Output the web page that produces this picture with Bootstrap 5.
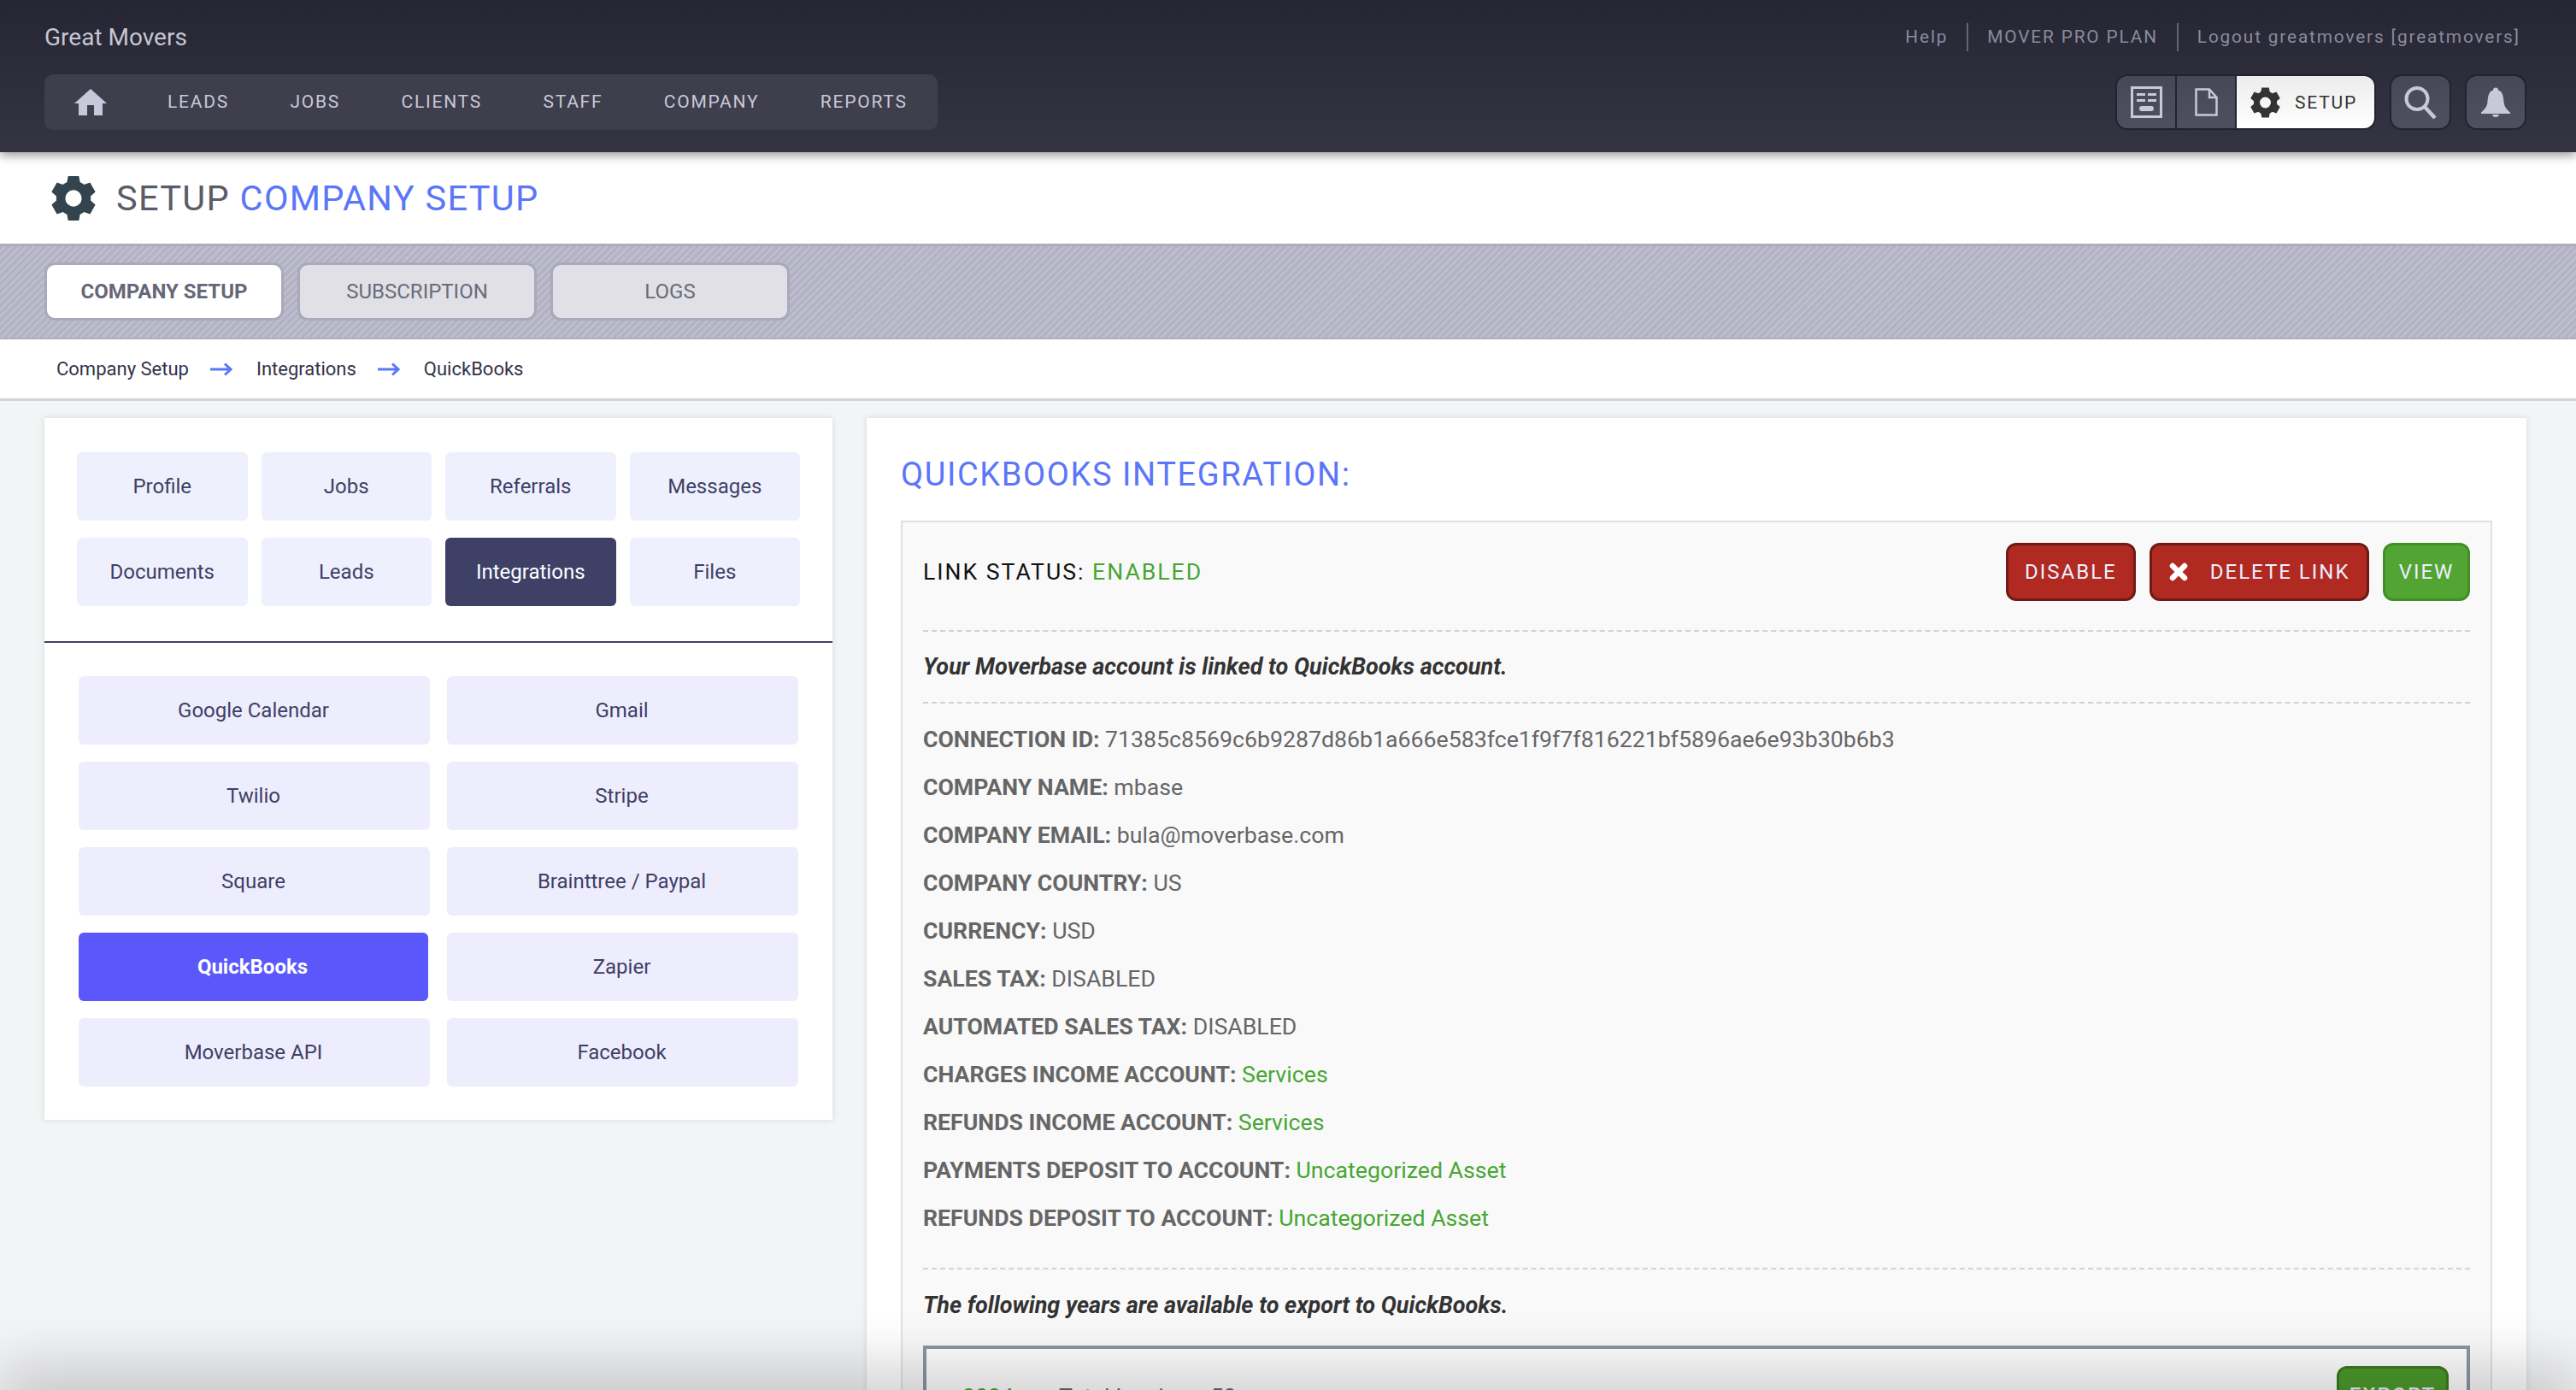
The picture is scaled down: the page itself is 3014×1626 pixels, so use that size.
<!DOCTYPE html>
<html lang="en">
<head>
<meta charset="utf-8">
<title>Great Movers</title>
<link rel="stylesheet" href="https://cdn.jsdelivr.net/npm/bootstrap@5.3.0/dist/css/bootstrap.min.css">
<style>
html,body{height:100%;overflow:hidden}
body{font-family:Roboto,"Liberation Sans",sans-serif;background:#f3f4f6;color:#666;font-size:26.7px}
.app-head{background:linear-gradient(#252533,#343443);height:178px;padding:0 58px 0 52px;position:relative;z-index:2;box-shadow:0 3px 12px rgba(0,0,0,.45)}
.head-top{height:87px}
.brand-name{font-size:28px;color:#c6c6d4}
.top-links{font-size:20.8px;letter-spacing:1.85px;color:#8b8b9d}
.top-links span{padding:0 22px;border-right:2px solid #666672;line-height:33px;display:block}
.top-links span:first-child{padding-left:0}
.top-links span:last-child{border:0;padding-right:7px}
.main-nav{height:65px;width:1045px;background:#3e3e4c;border-radius:10px;padding-left:35px}
.main-nav a{font-size:21px;letter-spacing:1.75px;color:#c9c8da;text-decoration:none;margin-right:71.500px}
.main-nav a.home{margin-right:71px;display:flex}
.main-nav a:last-child{margin-right:0}
.tool-group{height:65px;border:2px solid #222230;border-radius:14px;background:#222230;overflow:hidden;width:305px;gap:2px}
.tool-cell{background:linear-gradient(#474757,#4f4f60);height:100%;width:68px}
.tool-setup{flex:1;background:linear-gradient(#ececec,#fff);color:#333;font-size:21px;letter-spacing:1.8px;padding:2px 0 0 16px;gap:17px}
.tool-setup svg{margin-top:-2px}
.tool-round{width:72px;height:65px;border:2px solid #222230;border-radius:14px;background:linear-gradient(#474757,#4f4f60)}
.title-row{height:107px;background:#fff;padding-left:60px;gap:24px}
.title-cog{color:#34444f}
.title-text{font-size:41.5px;letter-spacing:1.3px;color:#5a5c68;line-height:1;margin:0;font-weight:400}
.title-text span,.panel-heading{color:#5b76f7}
.tab-strip{height:113px;border-top:3px solid #adadbd;border-bottom:3px solid #adadbd;background:repeating-linear-gradient(135deg,#b2b2c4 0 3px,#bdbdcd 3px 6px);padding:19px 52px 0 52px;gap:16px}
.tab-btn{width:280px;height:68px;border:3px solid #a9a9bb;border-radius:12px;background:#e0e0e6;color:#6a6b7a;font-size:24px;padding:0;display:flex;align-items:center;justify-content:center}
.tab-btn.is-on{background:#fff;font-weight:700;color:#666776}
.crumbs{height:72px;background:#fff;border-bottom:3px solid #d2d2da;padding-left:66px;font-size:22px;color:#32334a;margin-top:-1px}
.crumbs svg{margin:0 28px 0 25px}
.work-area{padding:20px 58px 0 52px;gap:40px;align-items:flex-start}
.side-card{width:922px;background:#fff;box-shadow:0 0 7px rgba(0,0,0,.12);height:821px}
.side-top{padding:40px 38px 41px 38px;border-bottom:2px solid #3e3f66;display:grid;grid-template-columns:repeat(4,1fr);gap:20px 16px}
.side-bot{padding:39px 40px;display:grid;grid-template-columns:repeat(2,1fr);gap:20px}
.side-btn{height:80px;border:0;border-radius:6px;background:#eef1fd;color:#3e3f66;font-size:24px;padding:0;display:flex;align-items:center;justify-content:center}
.side-bot .side-btn{background:#eeedfd;padding-right:2px}
.side-top .side-btn.is-on{background:#3e4066;color:#fff}
.side-bot .side-btn.is-on{background:#5a58fb;color:#fff;font-weight:700;width:409px}
.main-panel{width:1942px;background:#fff;box-shadow:0 0 7px rgba(0,0,0,.12);padding:0 40px;height:1300px}
.panel-heading{font-size:38px;letter-spacing:1.6px;line-height:1;margin:0;padding:47px 0 35px;font-weight:400}
.info-box{border:2px solid #e0e0e8;background:#f9f9fa;padding:24px 24px}
.status-line{font-size:26.6px;letter-spacing:2px;color:#111}
.good{color:#47a632}
.act-btn{height:68px;border-radius:12px;border:3px solid #6f1a15;background:#b02a22;color:#eeeeff;font-size:24px;letter-spacing:2px;padding:0 19.500px;display:flex;align-items:center;justify-content:center}
.act-btn.go{background:#52a532;border-color:#428f26;padding:0 16px;width:102px}
.act-btn.export-btn{background:#4d9b2c;border-color:#3d7a22;width:131px;padding:0;font-weight:500}
.act-btn:hover{color:#fff}
.cross{margin-right:26px}
.dash{border-top:2px dashed #d2d2d2}
.dash-a{margin-top:34px}
.dash-c{margin-top:37px}
.note{font-size:27px;font-weight:700;font-style:italic;color:#333;line-height:42px}
.note-a{margin:20px 0}
.note-c{margin:21px 0 26px}
.fields{padding-top:21px}
.field{line-height:42px;margin-bottom:14px;white-space:nowrap}
.field b{font-weight:700}
.year-box{border:4px solid #8a97a6;background:#fff;height:200px;padding:20px 21px 0 42px}
.year-line{padding-top:15px;line-height:42px}
.year-total{margin-left:53px}
.page-fade{position:fixed;left:20px;right:20px;bottom:-30px;height:30px;box-shadow:0 0 70px 24px rgba(0,0,0,.2);z-index:5}
</style>
</head>
<body>
<svg width="0" height="0" class="d-block">
<symbol id="cog" viewBox="-27 -27 54 54">
<circle r="15.5" fill="none" stroke="currentColor" stroke-width="11"/>
<g fill="currentColor">
<polygon id="tooth" points="-8.5,-17 -6.5,-27 6.5,-27 8.5,-17"/>
<use href="#tooth" transform="rotate(60)"/><use href="#tooth" transform="rotate(120)"/><use href="#tooth" transform="rotate(180)"/><use href="#tooth" transform="rotate(240)"/><use href="#tooth" transform="rotate(300)"/>
</g>
</symbol>
<symbol id="arrow" viewBox="0 0 26 16">
<path d="M0 8H24M17 1.5 24 8 17 14.5" fill="none" stroke="#5b76f7" stroke-width="3"/>
</symbol>
</svg>

<header class="app-head">
<div class="head-top d-flex justify-content-between align-items-center">
<div class="brand-name">Great Movers</div>
<div class="top-links d-flex"><span>Help</span><span>MOVER PRO PLAN</span><span>Logout greatmovers [greatmovers]</span></div>
</div>
<div class="d-flex justify-content-between align-items-center">
<nav class="main-nav d-flex align-items-center">
<a class="home" href="#"><svg width="38" height="31" viewBox="0 0 38 31"><path d="M19 0 38 17H33V31H23V19H15V31H5V17H0Z" fill="#c9c8da"/></svg></a>
<a href="#">LEADS</a><a href="#">JOBS</a><a href="#">CLIENTS</a><a href="#">STAFF</a><a href="#">COMPANY</a><a href="#">REPORTS</a>
</nav>
<div class="d-flex align-items-center gap-3">
<div class="tool-group d-flex">
<div class="tool-cell d-flex align-items-center justify-content-center">
<svg width="37" height="37" viewBox="0 0 37 37" fill="#c9c8da"><rect x="1.5" y="1.5" width="34" height="34" fill="none" stroke="#c9c8da" stroke-width="3"/><rect x="7" y="8" width="10" height="3"/><rect x="20" y="8" width="10" height="3"/><rect x="7" y="15" width="10" height="3"/><rect x="20" y="15" width="10" height="3"/><rect x="10" y="23" width="17" height="6" rx="3"/></svg>
</div>
<div class="tool-cell d-flex align-items-center justify-content-center">
<svg width="27" height="33" viewBox="0 0 27 33" fill="none" stroke="#c9c8da" stroke-width="2.5"><path d="M1.5 1.5H17L25.5 11V31.5H1.5Z"/><path d="M17 1.5V11H25.5" /></svg>
</div>
<div class="tool-setup d-flex align-items-center"><svg width="35" height="36"><use href="#cog"/></svg>SETUP</div>
</div>
<div class="tool-round d-flex align-items-center justify-content-center">
<svg width="40" height="40" viewBox="0 0 40 40" fill="none" stroke="#c9c8da"><circle cx="16" cy="15.500" r="12.500" stroke-width="4"/><path d="M24 24 37 38" stroke-width="4.500"/></svg>
</div>
<div class="tool-round d-flex align-items-center justify-content-center">
<svg width="34" height="35" viewBox="0 0 34 35" fill="#c9c8da"><circle cx="17" cy="3.500" r="3"/><path d="M17 3C25 3 26 10 26.500 17 27 23 30 26 34 29.500V31H0V29.500C4 26 7 23 7.500 17 8 10 9 3 17 3Z"/><path d="M13 32H21C21 36 13 36 13 32Z"/></svg>
</div>
</div>
</div>
</header>

<section class="title-row d-flex align-items-center">
<svg width="52" height="54" class="title-cog"><use href="#cog"/></svg>
<h1 class="title-text">SETUP <span>COMPANY SETUP</span></h1>
</section>

<section class="tab-strip d-flex">
<a class="btn tab-btn is-on" href="#">COMPANY SETUP</a>
<a class="btn tab-btn" href="#">SUBSCRIPTION</a>
<a class="btn tab-btn" href="#">LOGS</a>
</section>

<section class="crumbs d-flex align-items-center">
<span>Company Setup</span><svg width="26" height="16"><use href="#arrow"/></svg><span>Integrations</span><svg width="26" height="16"><use href="#arrow"/></svg><span>QuickBooks</span>
</section>

<main class="work-area d-flex">
<aside class="side-card">
<div class="side-top">
<a class="btn side-btn" href="#">Profile</a><a class="btn side-btn" href="#">Jobs</a><a class="btn side-btn" href="#">Referrals</a><a class="btn side-btn" href="#">Messages</a>
<a class="btn side-btn" href="#">Documents</a><a class="btn side-btn" href="#">Leads</a><a class="btn side-btn is-on" href="#">Integrations</a><a class="btn side-btn" href="#">Files</a>
</div>
<div class="side-bot">
<a class="btn side-btn" href="#">Google Calendar</a><a class="btn side-btn" href="#">Gmail</a>
<a class="btn side-btn" href="#">Twilio</a><a class="btn side-btn" href="#">Stripe</a>
<a class="btn side-btn" href="#">Square</a><a class="btn side-btn" href="#">Brainttree / Paypal</a>
<a class="btn side-btn is-on" href="#">QuickBooks</a><a class="btn side-btn" href="#">Zapier</a>
<a class="btn side-btn" href="#">Moverbase API</a><a class="btn side-btn" href="#">Facebook</a>
</div>
</aside>
<section class="main-panel">
<h2 class="panel-heading">QUICKBOOKS INTEGRATION:</h2>
<div class="info-box">
<div class="d-flex justify-content-between align-items-center">
<div class="status-line">LINK STATUS: <span class="good">ENABLED</span></div>
<div class="d-flex gap-3">
<a class="btn act-btn" href="#">DISABLE</a>
<a class="btn act-btn" href="#"><svg width="22" height="22" viewBox="0 0 22 22" class="cross"><path d="M4 4 18 18M18 4 4 18" stroke="#fff" stroke-width="6.500" stroke-linecap="round"/></svg>DELETE LINK</a>
<a class="btn act-btn go" href="#">VIEW</a>
</div>
</div>
<div class="dash dash-a"></div>
<div class="note note-a">Your Moverbase account is linked to QuickBooks account.</div>
<div class="dash"></div>
<div class="fields">
<div class="field"><b>CONNECTION ID:</b> 71385c8569c6b9287d86b1a666e583fce1f9f7f816221bf5896ae6e93b30b6b3</div>
<div class="field"><b>COMPANY NAME:</b> mbase</div>
<div class="field"><b>COMPANY EMAIL:</b> bula@moverbase.com</div>
<div class="field"><b>COMPANY COUNTRY:</b> US</div>
<div class="field"><b>CURRENCY:</b> USD</div>
<div class="field"><b>SALES TAX:</b> DISABLED</div>
<div class="field"><b>AUTOMATED SALES TAX:</b> DISABLED</div>
<div class="field"><b>CHARGES INCOME ACCOUNT:</b> <span class="good">Services</span></div>
<div class="field"><b>REFUNDS INCOME ACCOUNT:</b> <span class="good">Services</span></div>
<div class="field"><b>PAYMENTS DEPOSIT TO ACCOUNT:</b> <span class="good">Uncategorized Asset</span></div>
<div class="field"><b>REFUNDS DEPOSIT TO ACCOUNT:</b> <span class="good">Uncategorized Asset</span></div>
</div>
<div class="dash dash-c"></div>
<div class="note note-c">The following years are available to export to QuickBooks.</div>
<div class="year-box d-flex justify-content-between align-items-start">
<div class="year-line"><span class="good">2024</span><span class="year-total">Total Invoices: 52</span></div>
<a class="btn act-btn export-btn" href="#">EXPORT</a>
</div>
</div>
</section>
</main>
<div class="page-fade"></div>
</body>
</html>
